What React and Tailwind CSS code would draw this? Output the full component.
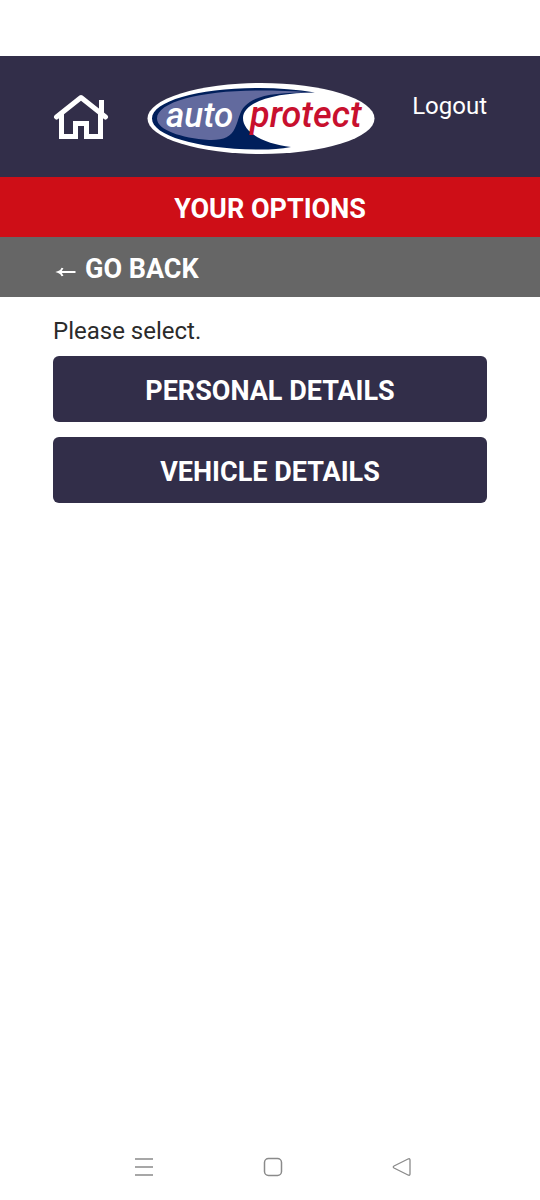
const options = [
  { id: 'personal', label: 'Personal Details' },
  { id: 'vehicle', label: 'Vehicle Details' },
];

function HomeIcon() {
  return (
    <svg width="56" height="48" viewBox="0 0 56 48" fill="none" stroke="#fff" strokeWidth="5" aria-hidden="true">
      <path d="M3.5 24 28 4.5 52.5 24" strokeLinecap="round" strokeLinejoin="round" />
      <path d="M8.5 21V43.5H22.5V30.5H33.5V43.5H47.5V21" />
      <path d="M48.5 7V20" />
    </svg>
  );
}

function BackArrow() {
  return (
    <svg width="24" height="24" viewBox="0 0 24 24" fill="none" stroke="#fff" strokeWidth="2" aria-hidden="true">
      <path d="M7 13H22.5" />
      <path d="M9.5 9Q8.5 12 5.5 13Q8.5 14 9.5 17" />
    </svg>
  );
}

function Logo() {
  return (
    <svg width="228" height="72" viewBox="0 0 228 72" role="img" aria-label="auto protect">
      <ellipse cx="114" cy="36.5" rx="113.5" ry="35.5" fill="#fff" />
      <path d="M168 10.5C150 7.5 132 6 112 6C52 6 5 19 5 36.5C5 54 52 67.5 114 67.5C124 67.5 134 67 144 65C118 62 96 51 96 36C96 20 128 10.5 168 10.5Z" fill="#001f5b" />
      <path d="M164 10.5C146 9 130 8.5 112 8.5C54 8.5 10 20 10 36.5C10 48 34 56 62 58C76 58.5 84 55 88 46C92 38 92 30 98 24C108 13 130 10.5 164 10.5Z" fill="#626a9e" />
      <g fontFamily="Roboto, sans-serif" fontStyle="italic" fontWeight="500">
        <text x="19" y="45" fontSize="35" fill="#fff">auto</text>
        <text x="103" y="45" fontSize="36" fill="#c8102e">protect</text>
      </g>
    </svg>
  );
}

function SystemNav() {
  return (
    <nav className="flex items-center justify-between h-[66px] pl-[134px] pr-32" aria-label="System">
      <button aria-label="Recent apps">
        <svg width="20" height="20" viewBox="0 0 20 20" fill="none" stroke="#8a8a8a" strokeWidth="1.5">
          <path d="M1 2H19M1 10H19M1 18H19" />
        </svg>
      </button>
      <button aria-label="Home">
        <svg width="20" height="20" viewBox="0 0 20 20" fill="none" stroke="#8a8a8a" strokeWidth="1.5">
          <rect x="1.5" y="1.5" width="17" height="17" rx="4" />
        </svg>
      </button>
      <button aria-label="Back">
        <svg width="20" height="20" viewBox="0 0 20 20" fill="none" stroke="#8a8a8a" strokeWidth="1.3">
          <path d="M2 9 16 2Q18 1.2 18 3V17Q18 18.8 16 18L2 11Q0.5 10 2 9Z" />
        </svg>
      </button>
    </nav>
  );
}

export default function App() {
  return (
    <div className="min-h-screen flex flex-col pt-14 bg-white text-[#2b2b2b] font-['Roboto',sans-serif]">
      <header className="flex items-start justify-between h-[121px] px-[53px] pt-[26px] bg-[#322e49] text-white">
        <a href="#home" aria-label="Home" className="pt-[11px]">
          <HomeIcon />
        </a>
        <Logo />
        <a href="#logout" className="pt-2 text-2xl">Logout</a>
      </header>

      <h1 className="h-[60px] flex items-center justify-center pt-1 bg-[#ce0e17] text-white text-[27px] font-bold uppercase">
        Your Options
      </h1>

      <a href="#back" className="h-[60px] flex items-center gap-2 px-[53px] pt-1 bg-[#666] text-white text-[27px] font-bold uppercase">
        <span className="pt-1">
          <BackArrow />
        </span>
        Go Back
      </a>

      <main className="flex-1 px-[53px] pt-4">
        <p className="text-2xl leading-9 mb-[7px]">Please select.</p>
        <div className="flex flex-col gap-[15px]">
          {options.map(o => (
            <button key={o.id} className="h-[66px] pt-1 rounded-md bg-[#322e49] text-white text-[27px] font-bold uppercase">
              {o.label}
            </button>
          ))}
        </div>
      </main>

      <SystemNav />
    </div>
  );
}
